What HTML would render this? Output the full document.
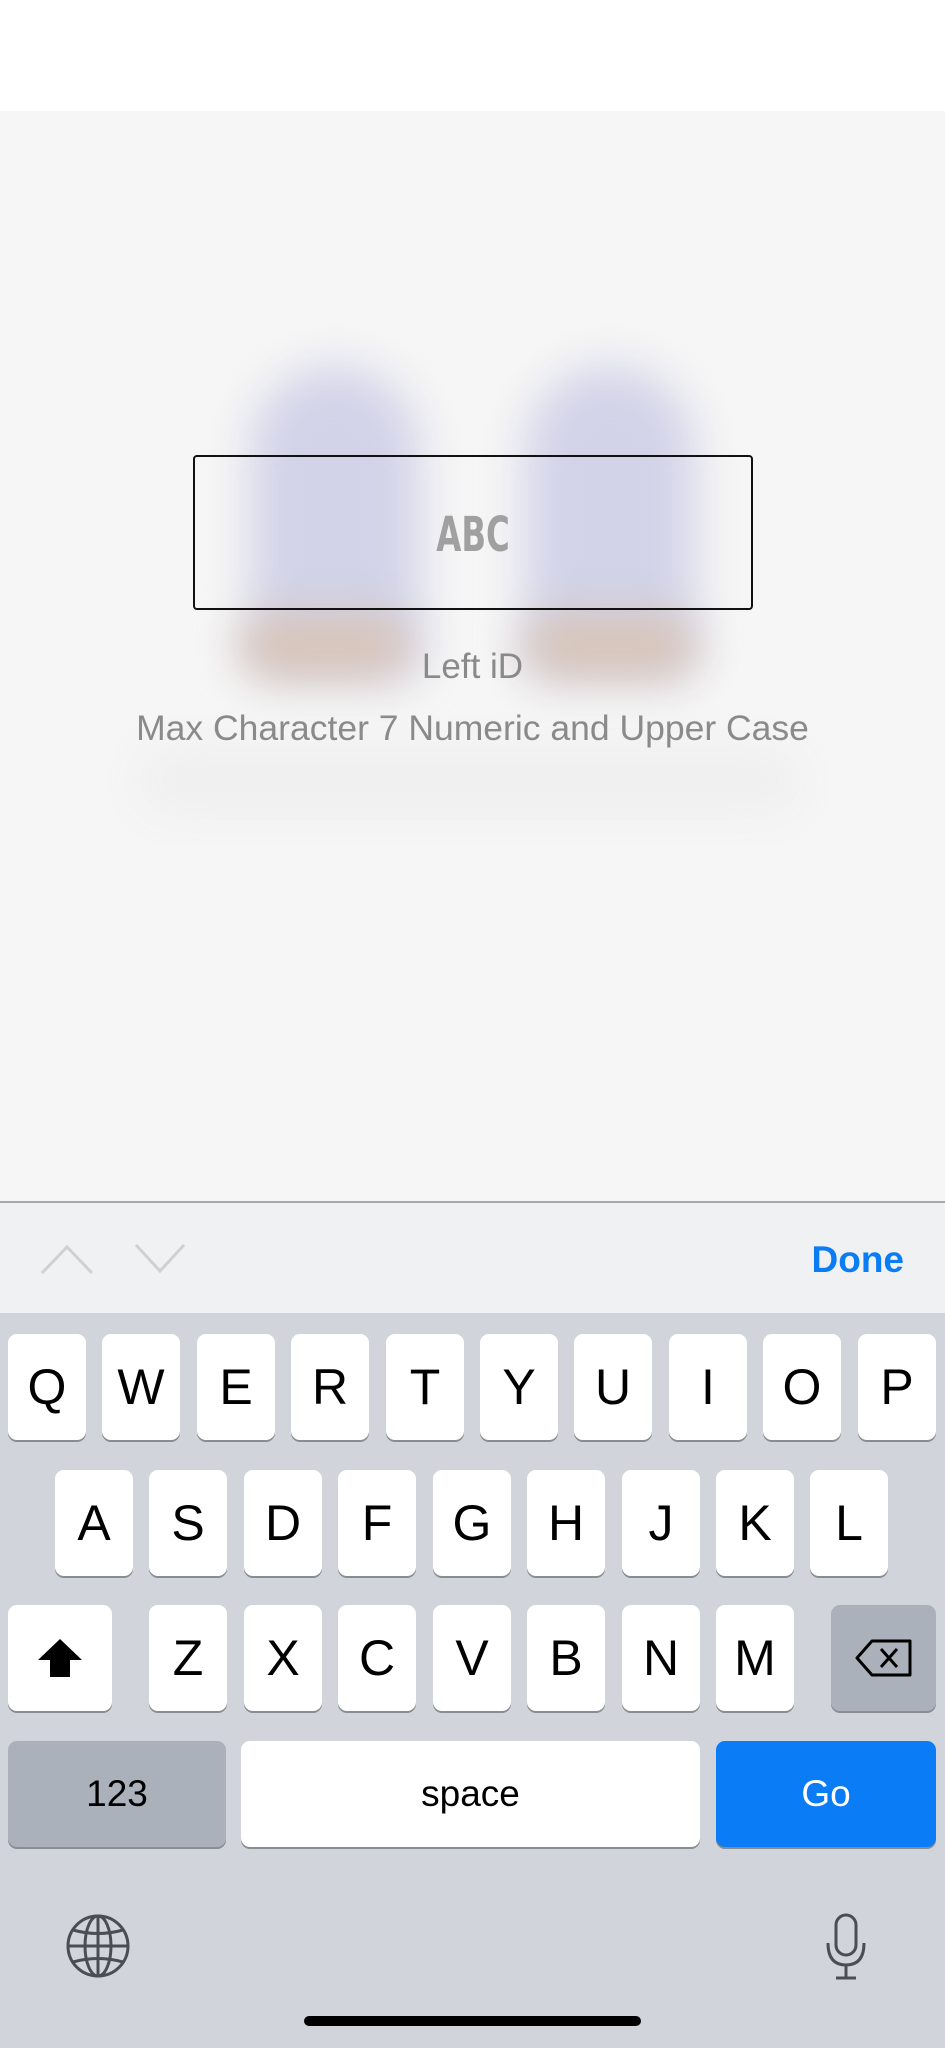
<!DOCTYPE html>
<html><head><meta charset="utf-8"><style>
*{margin:0;padding:0;box-sizing:border-box}
body{width:945px;height:2048px;position:relative;overflow:hidden;background:#fff;font-family:"Liberation Sans",sans-serif}
.abs{position:absolute}
.blob{position:absolute;filter:blur(22px)}
.key{position:absolute;background:#fff;border-radius:9px;box-shadow:0 2px 0 #888c93;display:flex;align-items:center;justify-content:center;font-size:50px;color:#000;height:106px}
.dk{background:#abb1bb}
</style></head><body>
<div class="abs" style="left:0;top:111px;width:945px;height:1091px;background:#f6f6f6;overflow:hidden">
  <div class="blob" style="left:250px;top:255px;width:170px;height:310px;background:#d2d3e8;border-radius:85px 85px 20px 20px"></div>
  <div class="blob" style="left:525px;top:255px;width:170px;height:310px;background:#d2d3e8;border-radius:85px 85px 20px 20px"></div>
  <div class="blob" style="left:240px;top:505px;width:170px;height:60px;background:#d8c4b6;border-radius:30px"></div>
  <div class="blob" style="left:525px;top:505px;width:170px;height:60px;background:#d8c4b6;border-radius:30px"></div>
  <div class="blob" style="left:140px;top:640px;width:660px;height:60px;background:#eeeeee;border-radius:30px"></div>
</div>
<div class="abs" style="left:193px;top:455px;width:560px;height:155px;border:2px solid #111;border-radius:4px;display:flex;align-items:center;justify-content:center">
  <span style="font-family:'DejaVu Sans Condensed','Liberation Sans',sans-serif;font-weight:bold;font-size:48px;color:#a0a0a0;transform:scaleX(0.75);display:inline-block;margin-top:4px">ABC</span>
</div>
<div class="abs" style="left:0;width:945px;top:647px;text-align:center;font-size:35px;color:#8a8a8a">Left iD</div>
<div class="abs" style="left:0;width:945px;top:708px;text-align:center;font-size:35.5px;color:#8a8a8a">Max Character 7 Numeric and Upper Case</div>

<div class="abs" style="left:0;top:1201px;width:945px;height:2px;background:#a8a8a8"></div>
<div class="abs" style="left:0;top:1203px;width:945px;height:110px;background:#f0f1f3">
  <svg class="abs" style="left:38px;top:36px" width="150" height="40"><path d="M4 34 L29 8 L54 34 M98 6 L122 32 L146 6" fill="none" stroke="#d0d0d0" stroke-width="3"/></svg>
  <div class="abs" style="right:41px;top:36px;font-size:37px;font-weight:bold;color:#0a7cf5">Done</div>
</div>
<div class="abs" style="left:0;top:1313px;width:945px;height:735px;background:#d1d5db"></div>

<div class="key" style="left:8px;top:1334px;width:78px">Q</div>
<div class="key" style="left:102px;top:1334px;width:78px">W</div>
<div class="key" style="left:197px;top:1334px;width:78px">E</div>
<div class="key" style="left:291px;top:1334px;width:78px">R</div>
<div class="key" style="left:386px;top:1334px;width:78px">T</div>
<div class="key" style="left:480px;top:1334px;width:78px">Y</div>
<div class="key" style="left:574px;top:1334px;width:78px">U</div>
<div class="key" style="left:669px;top:1334px;width:78px">I</div>
<div class="key" style="left:763px;top:1334px;width:78px">O</div>
<div class="key" style="left:858px;top:1334px;width:78px">P</div>

<div class="key" style="left:55px;top:1470px;width:78px">A</div>
<div class="key" style="left:149px;top:1470px;width:78px">S</div>
<div class="key" style="left:244px;top:1470px;width:78px">D</div>
<div class="key" style="left:338px;top:1470px;width:78px">F</div>
<div class="key" style="left:433px;top:1470px;width:78px">G</div>
<div class="key" style="left:527px;top:1470px;width:78px">H</div>
<div class="key" style="left:622px;top:1470px;width:78px">J</div>
<div class="key" style="left:716px;top:1470px;width:78px">K</div>
<div class="key" style="left:810px;top:1470px;width:78px">L</div>

<div class="key" style="left:8px;top:1605px;width:104px"><svg width="50" height="44"><path d="M25 3 L47 24 L35 24 L35 41 L15 41 L15 24 L3 24 Z" fill="#000"/></svg></div>
<div class="key" style="left:149px;top:1605px;width:78px">Z</div>
<div class="key" style="left:244px;top:1605px;width:78px">X</div>
<div class="key" style="left:338px;top:1605px;width:78px">C</div>
<div class="key" style="left:433px;top:1605px;width:78px">V</div>
<div class="key" style="left:527px;top:1605px;width:78px">B</div>
<div class="key" style="left:622px;top:1605px;width:78px">N</div>
<div class="key" style="left:716px;top:1605px;width:78px">M</div>
<div class="key dk" style="left:831px;top:1605px;width:105px"><svg width="60" height="40"><path d="M18 3 L56 3 L56 37 L18 37 L3 20 Z M27 11 L43 29 M43 11 L27 29" fill="none" stroke="#000" stroke-width="3" stroke-linejoin="round"/></svg></div>

<div class="key dk" style="left:8px;top:1741px;width:218px;font-size:37px">123</div>
<div class="key" style="left:241px;top:1741px;width:459px;font-size:37px">space</div>
<div class="key" style="left:716px;top:1741px;width:220px;font-size:37px;background:#0a7cf5;color:#fff">Go</div>

<svg class="abs" style="left:65px;top:1913px" width="66" height="66"><g fill="none" stroke="#4a4d52" stroke-width="3"><circle cx="33" cy="33" r="30"/><ellipse cx="33" cy="33" rx="13" ry="30"/><line x1="33" y1="3" x2="33" y2="63"/><line x1="3" y1="33" x2="63" y2="33"/><path d="M8 17 Q33 24 58 17 M8 49 Q33 42 58 49"/></g></svg>
<svg class="abs" style="left:824px;top:1913px" width="44" height="68"><g fill="none" stroke="#4a4d52" stroke-width="3"><rect x="12" y="2" width="20" height="40" rx="10"/><path d="M4 30 Q4 52 22 52 Q40 52 40 30 M22 52 L22 64 M12 65 L32 65"/></g></svg>
<div class="abs" style="left:304px;top:2016px;width:337px;height:10px;border-radius:5px;background:#000"></div>
</body></html>
